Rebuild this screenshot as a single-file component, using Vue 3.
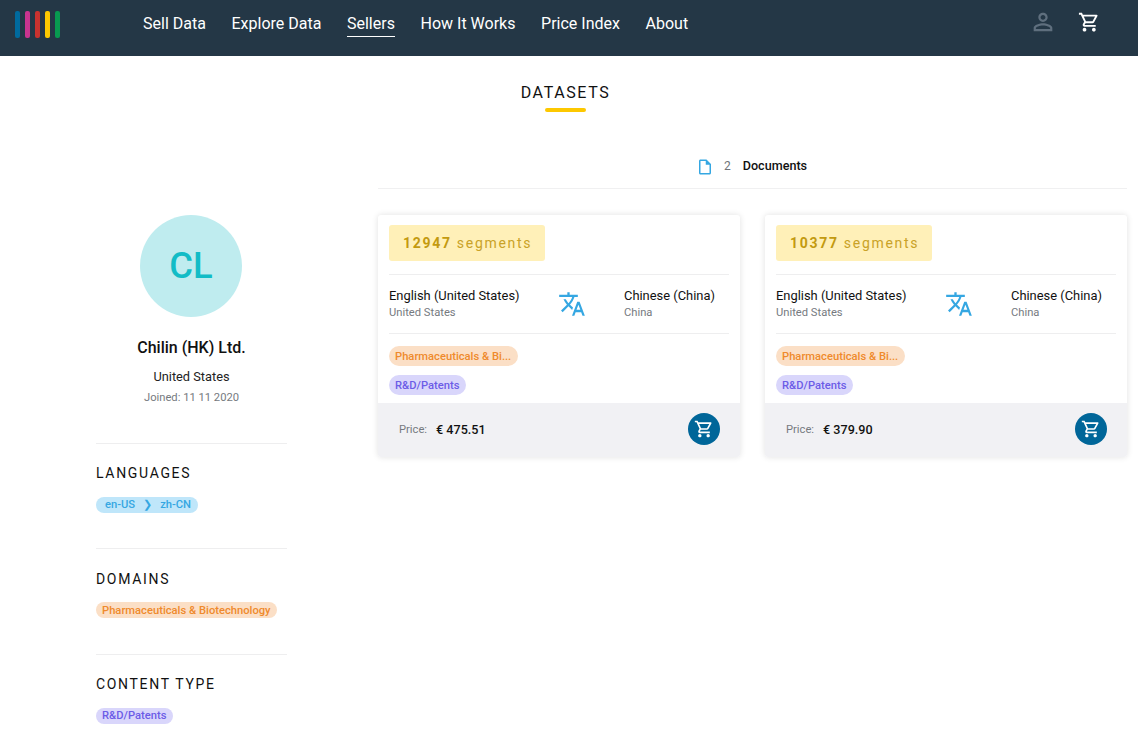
<script setup>
const nav = [
  { label: 'Sell Data' },
  { label: 'Explore Data' },
  { label: 'Sellers', active: true },
  { label: 'How It Works' },
  { label: 'Price Index' },
  { label: 'About' }
]
const bars = ['#006a9e', '#c9348f', '#c8322f', '#fdc800', '#089a50']
const cartPath = 'M15.55 13c.75 0 1.41-.41 1.75-1.03l3.58-6.49c.37-.66-.11-1.48-.87-1.48H5.21l-.94-2H1v2h2l3.6 7.59-1.35 2.44C4.52 15.37 5.48 17 7 17h12v-2H7l1.1-2h7.45zM6.16 6h12.15l-2.76 5H8.53L6.16 6zM7 18c-1.1 0-1.99.9-1.99 2S5.9 22 7 22s2-.9 2-2-.9-2-2-2zm10 0c-1.1 0-1.99.9-1.99 2s.89 2 1.99 2 2-.9 2-2-.9-2-2-2z'
const cards = [
  { segments: '12947', price: '€ 475.51' },
  { segments: '10377', price: '€ 379.90' }
]
</script>

<template>
  <div class="app">
    <header class="topbar">
      <div class="logo">
        <span v-for="c in bars" :key="c" class="logo-bar" :style="{ background: c }"></span>
      </div>
      <nav class="nav">
        <a v-for="n in nav" :key="n.label" class="nav-link" :class="{ active: n.active }">{{ n.label }}</a>
      </nav>
      <div class="top-icons">
        <svg class="user-icon" viewBox="0 0 24 24" width="28" height="28"><path fill="#5f6f7e" d="M12 5.9c1.16 0 2.1.94 2.1 2.1s-.94 2.1-2.1 2.1S9.9 9.16 9.9 8s.94-2.1 2.1-2.1m0 9c2.97 0 6.1 1.46 6.1 2.1v1.1H5.9V17c0-.64 3.13-2.1 6.1-2.1M12 4C9.79 4 8 5.79 8 8s1.79 4 4 4 4-1.79 4-4-1.79-4-4-4zm0 9c-2.67 0-8 1.34-8 4v3h16v-3c0-2.66-5.33-4-8-4z"/></svg>
        <svg class="cart-icon" viewBox="0 0 24 24" width="22.4" height="22.4"><path fill="#fff" :d="cartPath"/></svg>
      </div>
    </header>

    <h1 class="page-title">DATASETS</h1>
    <div class="title-bar"></div>

    <div class="columns">
      <aside class="sidebar">
        <div class="profile">
          <div class="avatar">CL</div>
          <div class="name">Chilin (HK) Ltd.</div>
          <div class="country">United States</div>
          <div class="joined">Joined: 11 11 2020</div>
        </div>
        <section class="side-section">
          <h3 class="side-title">LANGUAGES</h3>
          <div class="chip chip-lang"><span>en-US</span><span class="chev">❯</span><span>zh-CN</span></div>
        </section>
        <section class="side-section">
          <h3 class="side-title">DOMAINS</h3>
          <div class="chip chip-domain">Pharmaceuticals &amp; Biotechnology</div>
        </section>
        <section class="side-section">
          <h3 class="side-title">CONTENT TYPE</h3>
          <div class="chip chip-type">R&amp;D/Patents</div>
        </section>
      </aside>

      <main class="content">
        <div class="tabs">
          <svg class="doc-icon" viewBox="0 0 24 24" width="18" height="18"><path fill="#35a7e2" d="M14 2H6c-1.1 0-1.99.9-1.99 2L4 20c0 1.1.89 2 1.99 2H18c1.1 0 2-.9 2-2V8l-6-6zM6 20V4h7v5h5v11H6z"/></svg>
          <span class="tab-count">2</span>
          <span class="tab-label">Documents</span>
        </div>
        <div class="cards">
          <article v-for="c in cards" :key="c.segments" class="card">
            <div class="card-body">
              <div class="segments"><b>{{ c.segments }}</b> segments</div>
              <div class="langs">
                <div class="lang lang-src">
                  <div class="lang-name">English (United States)</div>
                  <div class="lang-sub">United States</div>
                </div>
                <svg class="translate" viewBox="0 0 24 24" width="28" height="28"><path fill="#35a7e2" d="M12.87 15.07l-2.54-2.51.03-.03c1.74-1.94 2.98-4.17 3.71-6.53H17V4h-7V2H8v2H1v1.99h11.17C11.5 7.92 10.44 9.75 9 11.35 8.07 10.32 7.3 9.19 6.69 8h-2c.73 1.63 1.73 3.17 2.98 4.56l-5.09 5.02L4 19l5-5 3.11 3.11.76-2.04zM18.5 10h-2L12 22h2l1.12-3h4.75L21 22h2l-4.5-12zm-2.62 7l1.62-4.33L19.12 17h-3.24z"/></svg>
                <div class="lang">
                  <div class="lang-name">Chinese (China)</div>
                  <div class="lang-sub">China</div>
                </div>
              </div>
              <div class="tags">
                <span class="tag chip-domain">Pharmaceuticals &amp; Bi...</span>
                <span class="tag chip-type">R&amp;D/Patents</span>
              </div>
            </div>
            <div class="card-foot">
              <span class="price-label">Price:</span>
              <span class="price">{{ c.price }}</span>
              <button class="buy">
                <svg viewBox="0 0 24 24" width="20" height="20"><path fill="#fff" :d="cartPath"/></svg>
              </button>
            </div>
          </article>
        </div>
      </main>
    </div>
  </div>
</template>

<style>
html, body { margin: 0; background: #fff; overflow: hidden; }
</style>

<style scoped>
.app {
  width: 1138px;
  height: 734px;
  overflow: hidden;
  font-family: Roboto, "Liberation Sans", sans-serif;
  color: #111;
}
.topbar {
  height: 56px;
  background: #243746;
  display: flex;
  align-items: flex-start;
  padding-left: 15px;
  box-sizing: border-box;
}
.logo { display: flex; gap: 5px; margin-top: 11px; width: 128px; }
.logo-bar { width: 5px; height: 27px; border-radius: 2px; }
.nav { display: flex; gap: 25.6px; margin-top: 14px; }
.nav-link {
  color: #fff;
  font-size: 16px;
  line-height: 19px;
  padding-bottom: 3px;
  border-bottom: 1px solid transparent;
}
.nav-link.active { border-bottom-color: #fff; }
.top-icons { margin-left: auto; display: flex; align-items: flex-start; padding-right: 37.6px; gap: 20.7px; }
.user-icon { margin-top: 8px; }
.cart-icon { margin-top: 11px; }

.page-title {
  margin: 27px 0 0;
  padding-right: 7px;
  text-align: center;
  font-size: 16px;
  line-height: 19px;
  height: 19px;
  font-weight: 400;
  letter-spacing: 1.6px;
  color: #111;
}
.title-bar {
  width: 41px;
  height: 4px;
  background: #fdc800;
  border-radius: 2px;
  margin: 6px auto 0 545px;
}

.columns { display: flex; padding-left: 96px; }
.sidebar { width: 191px; margin-right: 91px; padding-top: 103px; flex: none; }
.profile {
  display: flex;
  flex-direction: column;
  align-items: center;
  padding-bottom: 38px;
}
.avatar {
  width: 102px;
  height: 102px;
  border-radius: 50%;
  background: #bfecef;
  color: #12bcc6;
  font-size: 36.4px;
  font-weight: 500;
  line-height: 101px;
  text-align: center;
  margin-right: 1px;
}
.name { margin-top: 21px; font-size: 16px; line-height: 20px; font-weight: 500; }
.country { margin-top: 11px; font-size: 12.8px; line-height: 16px; color: #222; }
.joined { margin-top: 6px; font-size: 11.2px; line-height: 14px; color: #767a80; }
.side-section { border-top: 1px solid #eeeeef; height: 105.4px; box-sizing: border-box; padding-top: 21.3px; }
.side-title {
  margin: 0;
  font-size: 14px;
  line-height: 17px;
  font-weight: 400;
  letter-spacing: 1.68px;
  color: #111;
}
.chip {
  display: inline-flex;
  align-items: center;
  height: 16px;
  border-radius: 8px;
  font-size: 11.2px;
  font-weight: 500;
  padding: 0 6.5px 0 6px;
  margin-top: 14.7px;
}
.chip-lang { background: #bfe6fa; color: #35a7e2; padding: 0 7px 0 9px; gap: 8px; }
.chev { font-size: 11px; }
.chip-domain { background: #fbdfc6; color: #ef8a2c; }
.chip-type { background: #d9d6fb; color: #6c5ce7; }

.content { width: 749px; }
.tabs {
  margin-top: 20px;
  height: 57px;
  box-sizing: border-box;
  border-bottom: 1px solid #f0f0f1;
  display: flex;
  align-items: flex-start;
  padding: 25px 0 0 317.7px;
  font-size: 12px;
}
.doc-icon { margin-top: 1px; }
.tab-count { color: #6f7378; margin-left: 10.3px; margin-top: 2px; line-height: 14px; }
.tab-label { font-size: 12.6px; font-weight: 500; color: #111; margin-left: 12px; margin-top: 2px; line-height: 14px; }
.cards { display: flex; gap: 25px; margin-top: 26px; }
.card {
  width: 362px;
  border-radius: 3px;
  background: #fff;
  box-shadow: 0 0 6px rgba(0, 0, 0, .12);
  overflow: hidden;
}
.card-body { padding: 10px 11px 8px; }
.segments {
  width: 156px;
  height: 36px;
  box-sizing: border-box;
  padding-left: 14px;
  line-height: 36px;
  background: #fff0b8;
  border-radius: 3px;
  font-size: 14px;
  letter-spacing: 1.7px;
  color: #c9a227;
}
.segments b { font-weight: 700; color: #c39a10; }
.langs {
  margin-top: 13px;
  height: 60px;
  box-sizing: border-box;
  border-top: 1px solid #eeeeef;
  border-bottom: 1px solid #eeeeef;
  display: flex;
  align-items: flex-start;
  padding-top: 13px;
}
.lang-src { width: 168.5px; }
.translate { margin-top: 2px; margin-right: 38.5px; }
.lang-name { font-size: 12.9px; line-height: 15px; color: #111; }
.lang-sub { font-size: 11.2px; line-height: 13px; margin-top: 3px; color: #767a80; }
.tags { display: flex; flex-direction: column; align-items: flex-start; gap: 9px; margin-top: 12px; }
.tag {
  height: 20px;
  line-height: 21px;
  border-radius: 10px;
  font-size: 11.2px;
  font-weight: 500;
  padding: 0 6.5px 0 6px;
}
.card-foot {
  height: 54px;
  background: #f1f1f4;
  display: flex;
  align-items: center;
  box-sizing: border-box;
  padding: 0 20px 2px 21px;
}
.price-label { font-size: 11.2px; color: #767a80; margin-right: 9px; }
.price { font-size: 12.6px; font-weight: 500; color: #111; }
.buy {
  margin-left: auto;
  width: 32px;
  height: 32px;
  border: 0;
  padding: 0;
  border-radius: 50%;
  background: #006699;
  display: flex;
  align-items: center;
  justify-content: center;
}
</style>
